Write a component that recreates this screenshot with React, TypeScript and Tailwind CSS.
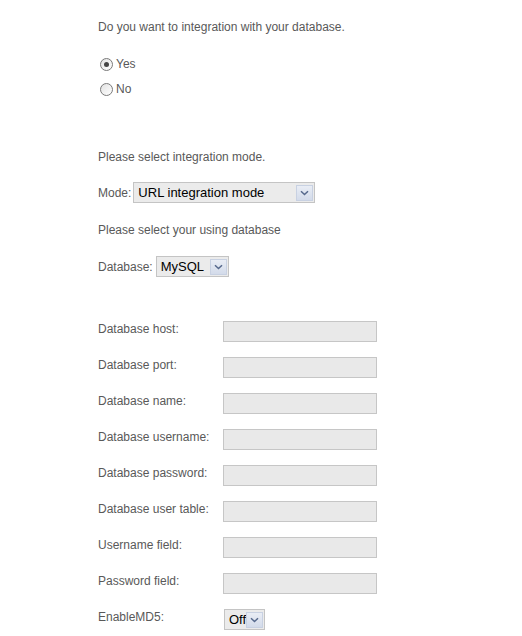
import React from "react";

function Arrow() {
  return (
    <div className="flex h-[16px] w-[17px] items-center justify-center border border-[#c8d1e2] bg-gradient-to-b from-[#e9edf5] to-[#d3dbea]">
      <svg width="9" height="6" viewBox="0 0 9 6">
        <path d="M1 1.2 L4.5 4.5 L8 1.2" fill="none" stroke="#56698c" strokeWidth="1.5" />
      </svg>
    </div>
  );
}

function FakeSelect({ value, width }: { value: string; width: string }) {
  return (
    <div
      className={`${width} flex h-[21px] items-center justify-between border border-[#c4c4c4] bg-[#ebebeb] pl-[4px] pr-[1px] font-['Liberation_Sans',Arial,sans-serif] text-[13px] leading-[15px] text-black`}
    >
      <span>{value}</span>
      <Arrow />
    </div>
  );
}

function Radio({ checked }: { checked?: boolean }) {
  return (
    <div className="flex h-[13px] w-[13px] items-center justify-center rounded-full border border-[#7a7a7a] bg-gradient-to-br from-[#e2e2e2] to-white">
      {checked && <div className="h-[5px] w-[5px] rounded-full bg-[#444]" />}
    </div>
  );
}

const fields = [
  "Database host:",
  "Database port:",
  "Database name:",
  "Database username:",
  "Database password:",
  "Database user table:",
  "Username field:",
  "Password field:",
];

export default function App() {
  return (
    <div className="min-h-[636px] w-[522px] bg-white pl-[98px] pt-[20px] font-['Liberation_Sans',Arial,sans-serif] text-[12px] leading-[14px] text-[#595959]">
      <p>Do you want to integration with your database.</p>
      <div className="mt-[23px] flex items-center">
        <div className="ml-[2px]">
          <Radio checked />
        </div>
        <span className="ml-[3px]">Yes</span>
      </div>
      <div className="mt-[11px] flex items-center">
        <div className="ml-[2px]">
          <Radio />
        </div>
        <span className="ml-[3px]">No</span>
      </div>

      <p className="mt-[54px]">Please select integration mode.</p>
      <div className="mt-[18px] flex items-center">
        <span>Mode:</span>
        <div className="ml-[2px]">
          <FakeSelect value="URL integration mode" width="w-[182px]" />
        </div>
      </div>

      <p className="mt-[20px]">Please select your using database</p>
      <div className="mt-[19px] flex items-center">
        <span>Database:</span>
        <div className="ml-[3px]">
          <FakeSelect value="MySQL" width="w-[73px]" />
        </div>
      </div>

      <div className="mt-[44px] flex flex-col gap-[15px]">
        {fields.map((f) => (
          <div key={f} className="flex items-start">
            <span className="w-[125px] pt-[1px]">{f}</span>
            <div className="h-[21px] w-[154px] border border-[#c6c6c6] bg-[#e9e9e9]" />
          </div>
        ))}
        <div className="flex items-start">
          <span className="w-[125px] pt-[1px]">EnableMD5:</span>
          <div className="ml-[1px]">
            <FakeSelect value="Off" width="w-[41px]" />
          </div>
        </div>
      </div>
    </div>
  );
}
